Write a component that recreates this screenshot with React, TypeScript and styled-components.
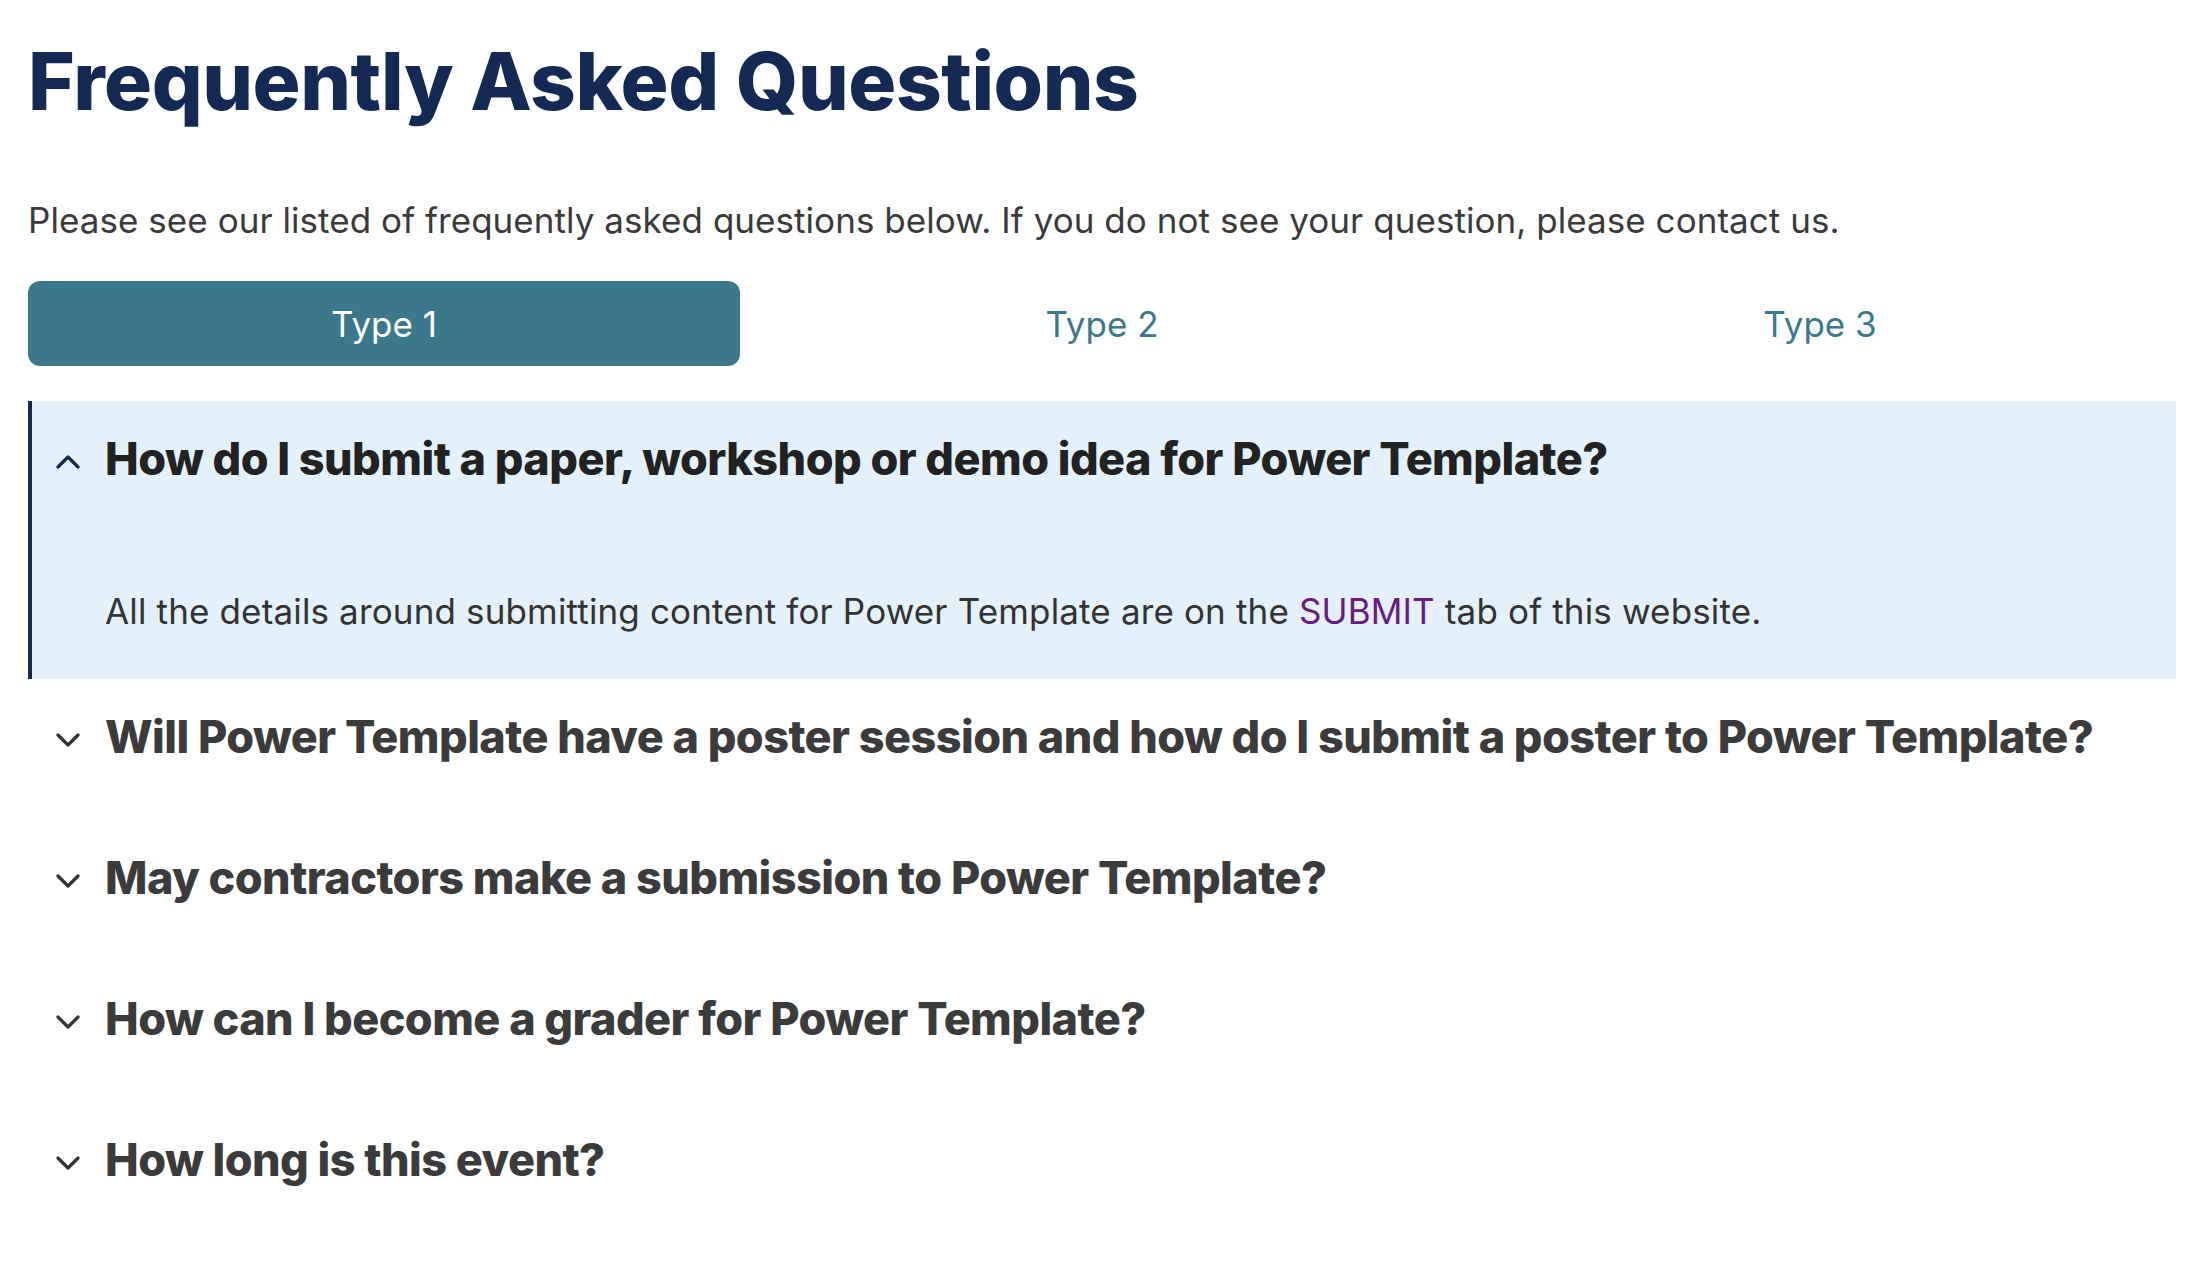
import { useState } from 'react';
import styled, { createGlobalStyle } from 'styled-components';

const GlobalStyle = createGlobalStyle`
  html, body { margin: 0; padding: 0; background: #ffffff; }
  body { font-family: Inter, "Noto Sans", "Liberation Sans", sans-serif; }
`;

const Page = styled.main`
  padding: 33px 26px 40px 28px;
`;

const Title = styled.h1`
  margin: 0;
  font-size: 80px;
  line-height: 96px;
  font-weight: 800;
  letter-spacing: -0.45px;
  color: #142a55;
`;

const Intro = styled.p`
  margin: 65px 0 0;
  font-size: 35px;
  line-height: 52px;
  letter-spacing: 0.05px;
  color: #3a3a3a;
`;

const Tabs = styled.div`
  display: grid;
  grid-template-columns: repeat(3, 1fr);
  gap: 6px;
  margin-top: 35px;
`;

const Tab = styled.button<{ $active: boolean }>`
  height: 85px;
  border: none;
  border-radius: 12px;
  font-family: inherit;
  font-size: 35px;
  cursor: pointer;
  background: ${({ $active }) => ($active ? '#3b788c' : 'transparent')};
  color: ${({ $active }) => ($active ? '#ffffff' : '#3b788c')};
`;

const List = styled.div`
  margin-top: 35px;
`;

const Item = styled.div<{ $open: boolean }>`
  background: ${({ $open }) => ($open ? '#e4f1fa' : 'transparent')};
  border-left: 4px solid ${({ $open }) => ($open ? '#132a55' : 'transparent')};
`;

const Header = styled.button<{ $open: boolean }>`
  display: flex;
  align-items: center;
  gap: 25px;
  width: 100%;
  padding: 31px 0 56px 24px;
  border: none;
  background: none;
  text-align: left;
  cursor: pointer;
  font-family: inherit;
  font-size: 45px;
  line-height: 54px;
  font-weight: 800;
  letter-spacing: -0.55px;
  color: ${({ $open }) => ($open ? '#222222' : '#3b3b3b')};
`;

const Chevron = styled.svg<{ $open: boolean }>`
  flex-shrink: 0;
  margin-top: 6px;
  color: ${({ $open }) => ($open ? '#132a55' : '#333333')};
`;

const Answer = styled.div`
  padding: 43px 0 42px 73px;
  font-size: 35px;
  line-height: 52px;
  letter-spacing: 0.15px;
  color: #333333;
`;

const Link = styled.a`
  color: #6a1a80;
  text-decoration: none;
`;

const FAQS = [
  {
    q: 'How do I submit a paper, workshop or demo idea for Power Template?',
    a: (
      <>
        All the details around submitting content for Power Template are on the <Link href="#submit">SUBMIT</Link> tab of this website.
      </>
    ),
  },
  { q: 'Will Power Template have a poster session and how do I submit a poster to Power Template?', a: 'Details on the poster session will be shared on the SUBMIT tab.' },
  { q: 'May contractors make a submission to Power Template?', a: 'Yes, contractors are welcome to submit.' },
  { q: 'How can I become a grader for Power Template?', a: 'Please contact us to volunteer as a grader.' },
  { q: 'How long is this event?', a: 'The event runs over several days.' },
];

export default function App() {
  const [tab, setTab] = useState(0);
  const [open, setOpen] = useState<number | null>(0);

  return (
    <Page>
      <GlobalStyle />
      <Title>Frequently Asked Questions</Title>
      <Intro>Please see our listed of frequently asked questions below. If you do not see your question, please contact us.</Intro>
      <Tabs>
        {['Type 1', 'Type 2', 'Type 3'].map((t, i) => (
          <Tab key={t} $active={tab === i} onClick={() => setTab(i)}>{t}</Tab>
        ))}
      </Tabs>
      <List>
        {FAQS.map((f, i) => {
          const isOpen = open === i;
          return (
            <Item key={f.q} $open={isOpen}>
              <Header $open={isOpen} onClick={() => setOpen(isOpen ? null : i)}>
                <Chevron $open={isOpen} width="24" height="14" viewBox="0 0 24 14" fill="none">
                  <polyline
                    points={isOpen ? '2,12 12,2 22,12' : '2,2 12,12 22,2'}
                    stroke="currentColor" strokeWidth="3.2" strokeLinecap="round" strokeLinejoin="round"
                  />
                </Chevron>
                <span>{f.q}</span>
              </Header>
              {isOpen && <Answer>{f.a}</Answer>}
            </Item>
          );
        })}
      </List>
    </Page>
  );
}
